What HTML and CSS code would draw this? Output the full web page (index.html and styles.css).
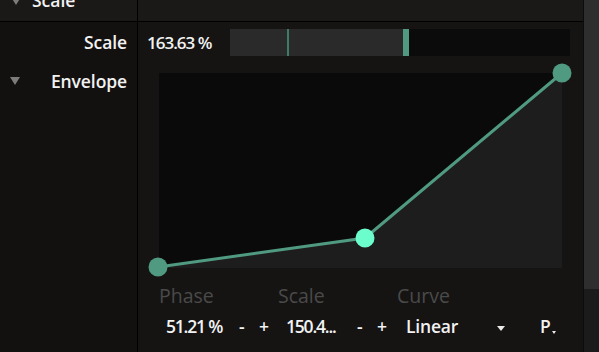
FILE: index.html
```html
<!DOCTYPE html>
<html lang="en">
<head>
    <meta charset="UTF-8">
    <title>Envelope</title>
    <link rel="stylesheet" href="styles.css">
</head>
<body>
    <div class="app">
        <div class="main">
            <div class="header">
                <div class="header-left">
                    <span class="tri"></span>
                    <span class="header-title">Scale</span>
                </div>
                <div class="header-right"></div>
            </div>

            <div class="row row-scale">
                <div class="label-cell">
                    <span class="label">Scale</span>
                </div>
                <div class="content-cell scale-cell">
                    <span class="value">163.63 %</span>
                    <div class="slider">
                        <div class="slider-fill"></div>
                        <div class="slider-mark"></div>
                        <div class="slider-handle"></div>
                    </div>
                </div>
            </div>

            <div class="row row-env">
                <div class="label-cell env-label">
                    <span class="tri"></span>
                    <span class="label">Envelope</span>
                </div>
                <div class="content-cell env-cell">
                    <div class="graph">
                        <svg width="403" height="195" viewBox="0 0 403 195">
                            <polygon points="-1,194 206,165 403,0 403,195 -1,195" fill="#1d1d1d"/>
                            <polyline points="-1,194 206,165 403,0" fill="none" stroke="#4f9a80" stroke-width="3"/>
                            <circle cx="-1" cy="194" r="9.5" fill="#4f9a80"/>
                            <circle cx="206" cy="165" r="9.5" fill="#6cfdcd"/>
                            <circle cx="403" cy="0" r="9.5" fill="#4f9a80"/>
                        </svg>
                    </div>
                    <div class="param-labels">
                        <span class="plabel w-phase">Phase</span>
                        <span class="plabel w-scale">Scale</span>
                        <span class="plabel">Curve</span>
                    </div>
                    <div class="param-values">
                        <span class="pval num w1">51.21 %</span>
                        <span class="pval w2">-</span>
                        <span class="pval w3">+</span>
                        <span class="pval num w4">150.4...</span>
                        <span class="pval w5">-</span>
                        <span class="pval w6">+</span>
                        <span class="pval w7">Linear</span>
                        <span class="pval w8"><span class="dd"></span></span>
                        <span class="pval preset">P<span class="mini-tri"></span></span>
                    </div>
                </div>
            </div>
        </div>
        <div class="scrollbar">
            <div class="thumb"></div>
        </div>
    </div>
</body>
</html>
```

FILE: styles.css
```css
body {
    margin: 0;
    background-color: #121110;
    font-family: "Open Sans", "Liberation Sans", sans-serif;
    color: #f2f2f2;
    overflow: hidden;
}
.app {
    display: flex;
    width: 599px;
    height: 352px;
}
.main {
    width: 583px;
    display: flex;
    flex-direction: column;
    border-right: 1px solid #0c0c0c;
}
.scrollbar {
    width: 15px;
    background-color: #1b1b1b;
}
.thumb {
    height: 289px;
    background-color: #2e2e2e;
}

/* header row, cut off at the top */
.header {
    display: flex;
    height: 21px;
    border-bottom: 1px solid #000;
    background-color: #1a1918;
    overflow: hidden;
}
.header-left {
    width: 138px;
    border-right: 1px solid #000;
    display: flex;
    align-items: flex-start;
    padding-left: 11px;
    box-sizing: border-box;
}
.header-left .tri {
    margin-top: -3px;
}
.header-title {
    font-size: 17.5px;
    font-weight: 600;
    line-height: 20px;
    margin-top: -10px;
    margin-left: 11px;
}
.header-right {
    flex: 1;
}

.tri {
    width: 0;
    height: 0;
    border-left: 5.5px solid transparent;
    border-right: 5.5px solid transparent;
    border-top: 8px solid #7c7c7c;
}

.row {
    display: flex;
}
.label-cell {
    width: 138px;
    border-right: 1px solid #000;
    background-color: #121110;
    display: flex;
    justify-content: flex-end;
    padding-right: 10px;
    box-sizing: border-box;
}
.label {
    font-size: 17.5px;
    font-weight: 600;
    line-height: 22px;
    letter-spacing: -0.1px;
}
.content-cell {
    flex: 1;
    background-color: #151413;
}

.row-scale {
    height: 40px;
}
.row-scale .label-cell {
    align-items: center;
}
.scale-cell {
    display: flex;
    align-items: center;
    padding-left: 9px;
}
.value {
    font-size: 17px;
    font-weight: 600;
    letter-spacing: -1px;
    width: 83px;
}
.slider {
    position: relative;
    width: 340px;
    height: 27px;
    margin-top: 1px;
    background-color: #0b0b0b;
}
.slider-fill {
    width: 173px;
    height: 100%;
    background-color: #2a2a2a;
}
.slider-mark {
    position: absolute;
    left: 57px;
    top: 0;
    width: 2px;
    height: 100%;
    background-color: #3f7a66;
}
.slider-handle {
    position: absolute;
    left: 173px;
    top: 0;
    width: 6px;
    height: 100%;
    background-color: #4f9a80;
}

.row-env {
    flex: 1;
}
.env-label {
    justify-content: space-between;
    align-items: flex-start;
    padding-left: 10px;
    padding-top: 8px;
}
.env-label .tri {
    margin-top: 7px;
}
.env-cell {
    padding-left: 21px;
    padding-top: 11px;
}
.graph {
    width: 403px;
    height: 195px;
    background-color: #0a0a0a;
}
.graph svg {
    display: block;
    overflow: visible;
}

.param-labels {
    display: flex;
    margin-top: 15px;
}
.plabel {
    font-size: 19.5px;
    line-height: 26px;
    color: #4a4a4a;
}
.w-phase {
    width: 119px;
}
.w-scale {
    width: 119px;
}

.param-values {
    display: flex;
    align-items: center;
    padding-left: 7px;
    margin-top: 5px;
    height: 24px;
}
.pval {
    font-size: 17.5px;
    font-weight: 600;
    letter-spacing: -0.2px;
}
.num {
    font-size: 17.5px;
    letter-spacing: -1.2px;
}
.w1 { width: 73px; }
.w2 { width: 20px; }
.w3 { width: 27px; }
.w4 { width: 71px; }
.w5 { width: 20px; }
.w6 { width: 29px; }
.w7 { width: 91px; }
.w8 { width: 43px; }
.dd {
    display: inline-block;
    width: 0;
    height: 0;
    border-left: 4px solid transparent;
    border-right: 4px solid transparent;
    border-top: 5px solid #eaeaea;
    vertical-align: middle;
}
.preset {
    position: relative;
}
.mini-tri {
    position: absolute;
    right: -5px;
    bottom: 4px;
    width: 0;
    height: 0;
    border-left: 2.5px solid transparent;
    border-right: 2.5px solid transparent;
    border-top: 3px solid #eaeaea;
}
```
